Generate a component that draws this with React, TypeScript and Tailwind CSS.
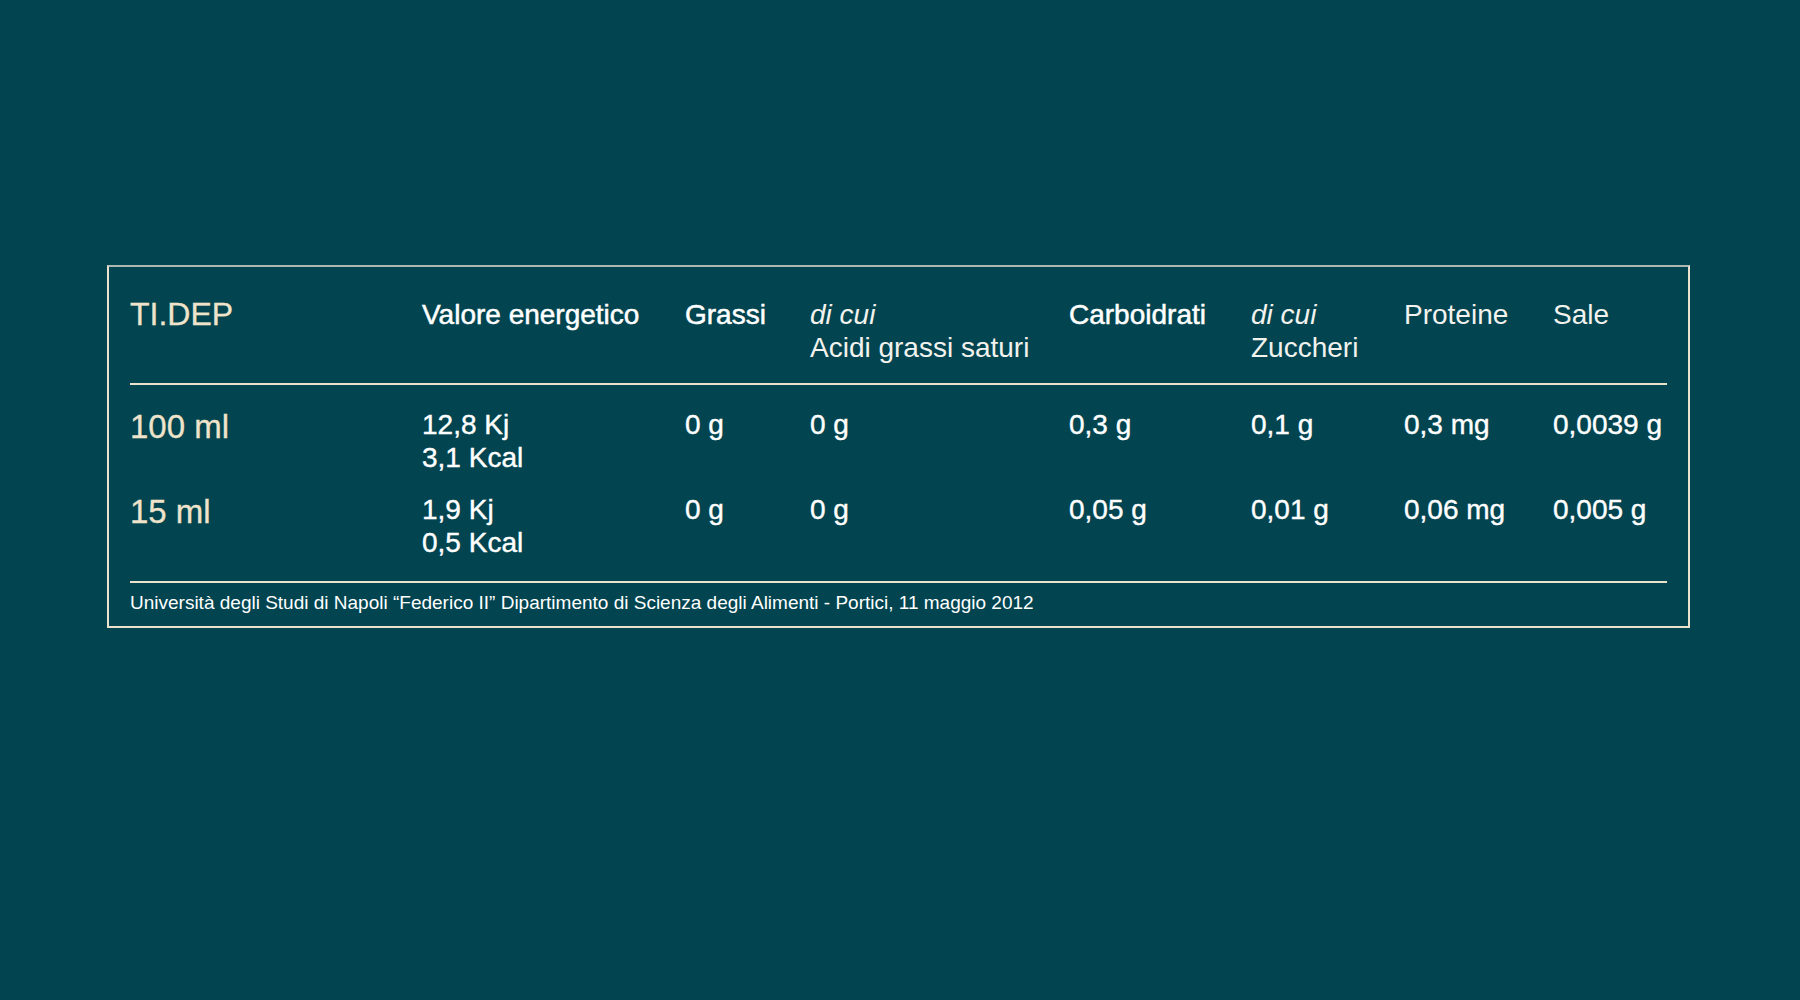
const columns = [
  { key: "energy", label: "Valore energetico", strong: true },
  { key: "fat", label: "Grassi", strong: true },
  { key: "sat", label: "Acidi grassi saturi", sub: true },
  { key: "carb", label: "Carboidrati", strong: true },
  { key: "sugar", label: "Zuccheri", sub: true },
  { key: "protein", label: "Proteine" },
  { key: "salt", label: "Sale" },
];

const rows = [
  {
    label: "100 ml",
    values: [["12,8 Kj", "3,1 Kcal"], ["0 g"], ["0 g"], ["0,3 g"], ["0,1 g"], ["0,3 mg"], ["0,0039 g"]],
  },
  {
    label: "15 ml",
    values: [["1,9 Kj", "0,5 Kcal"], ["0 g"], ["0 g"], ["0,05 g"], ["0,01 g"], ["0,06 mg"], ["0,005 g"]],
  },
];

const grid = "grid grid-cols-[292px_263px_125px_259px_182px_153px_149px_1fr] items-start";

export default function App() {
  return (
    <div className="min-h-screen w-full bg-[#02444f] pt-[265px] pl-[107px] font-['Liberation_Sans',Arial,sans-serif]">
      <div className="w-[1583px] border-2 border-[#ebe2cd] border-t-[#aab8b3] px-[21px] pt-[31px] pb-[12px]">
        <div className={grid}>
          <div className="text-[32px] leading-[33px] text-[#efe4cb] [-webkit-text-stroke:0.3px_#efe4cb]">TI.DEP</div>
          {columns.map((c) => (
            <div key={c.key} className="text-[28px] leading-[33px] text-white whitespace-nowrap">
              {c.sub && <div className="italic text-[#f2f2ee]">di cui</div>}
              <div className={c.strong ? "[-webkit-text-stroke:0.5px_white]" : "text-[#f2f2ee]"}>{c.label}</div>
            </div>
          ))}
        </div>

        <div className="mt-[19px] h-[2px] bg-[#ebe2cd]" />

        {rows.map((r, i) => (
          <div key={r.label} className={`${grid} ${i === 0 ? "mt-[23px]" : "mt-[19px]"}`}>
            <div className="text-[33px] leading-[38px] text-[#efe4cb] [-webkit-text-stroke:0.3px_#efe4cb]">{r.label}</div>
            {r.values.map((v, j) => (
              <div key={j} className="text-[28px] leading-[33px] text-white whitespace-nowrap [-webkit-text-stroke:0.4px_white]">
                {v.map((line) => (
                  <div key={line}>{line}</div>
                ))}
              </div>
            ))}
          </div>
        ))}

        <div className="mt-[22px] h-[2px] bg-[#ebe2cd]" />

        <p className="mt-[9px] text-[19px] leading-[22px] text-white whitespace-nowrap">
          Università degli Studi di Napoli “Federico II” Dipartimento di Scienza degli Alimenti - Portici, 11 maggio 2012
        </p>
      </div>
    </div>
  );
}
